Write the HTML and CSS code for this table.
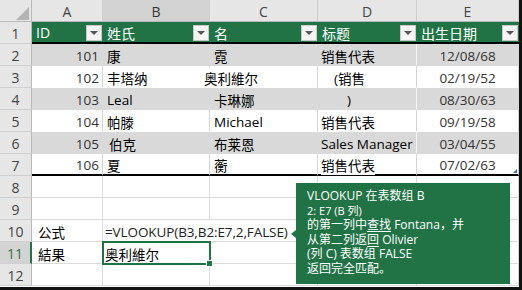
FILE: index.html
```html
<!DOCTYPE html>
<html lang="zh">
<head>
<meta charset="utf-8">
<link rel="stylesheet" href="styles.css">
</head>
<body>
<div class="sheet">
  <div class="grid">
    <div class="corner"><span class="tri"></span></div>
    <div class="ch">A</div><div class="ch selcol">B</div><div class="ch">C</div><div class="ch">D</div><div class="ch">E</div>

    <div class="rh">1</div>
    <div class="c th"><span>ID</span><i class="dd"></i></div>
    <div class="c th"><span>姓氏</span><i class="dd"></i></div>
    <div class="c th"><span>名</span><i class="dd"></i></div>
    <div class="c th"><span>标题</span><i class="dd"></i></div>
    <div class="c th"><span>出生日期</span><i class="dd"></i></div>

    <div class="rh">2</div>
    <div class="c band num">101</div>
    <div class="c band">康</div>
    <div class="c band">霓</div>
    <div class="c band dcol">销售代表</div>
    <div class="c band date">12/08/68</div>

    <div class="rh">3</div>
    <div class="c white num">102</div>
    <div class="c white">丰塔纳</div>
    <div class="c white shift"><span class="mask">奥利維尔</span></div>
    <div class="c white dcol in1">(销售</div>
    <div class="c white date">02/19/52</div>

    <div class="rh">4</div>
    <div class="c band num">103</div>
    <div class="c band">Leal</div>
    <div class="c band">卡琳娜</div>
    <div class="c band dcol in2">)</div>
    <div class="c band date">08/30/63</div>

    <div class="rh">5</div>
    <div class="c white num">104</div>
    <div class="c white">帕滕</div>
    <div class="c white">Michael</div>
    <div class="c white dcol">销售代表</div>
    <div class="c white date">09/19/58</div>

    <div class="rh">6</div>
    <div class="c band num">105</div>
    <div class="c band in0">伯克</div>
    <div class="c band">布莱恩</div>
    <div class="c band dcol">Sales Manager</div>
    <div class="c band date">03/04/55</div>

    <div class="rh">7</div>
    <div class="c white last num">106</div>
    <div class="c white last">夏</div>
    <div class="c white last">蘅</div>
    <div class="c white last dcol"><span class="mask">销售代表</span></div>
    <div class="c white last date resize">07/02/63</div>

    <div class="rh">8</div>
    <div class="c"></div><div class="c"></div><div class="c"></div><div class="c"></div><div class="c"></div>

    <div class="rh">9</div>
    <div class="c"></div><div class="c"></div><div class="c"></div><div class="c"></div><div class="c"></div>

    <div class="rh">10</div>
    <div class="c lab">公式</div>
    <div class="c formula noline">=VLOOKUP(B3,B2:E7,2,FALSE)</div>
    <div class="c"></div><div class="c"></div><div class="c"></div>

    <div class="rh selrow">11</div>
    <div class="c lab">結果</div>
    <div class="c active">奥利維尔</div>
    <div class="c"></div><div class="c"></div><div class="c"></div>

    <div class="rh">12</div>
    <div class="c"></div><div class="c"></div><div class="c"></div><div class="c"></div><div class="c"></div>
  </div>

  <div class="callout">
    <div>VLOOKUP 在表数组 B</div>
    <div class="small">2: E7 (B 列)</div>
    <div>的第一列中<span class="ul">查找</span> Fontana，并</div>
    <div>从第二列返<span class="ul">回</span> Olivier</div>
    <div>(列 C) 表数组 FALSE</div>
    <div>返回完全匹配。</div>
  </div>
</div>
</body>
</html>
```

FILE: styles.css
```css
html, body {
  margin: 0;
  padding: 0;
  background: #fff;
  overflow: hidden;
}

.sheet {
  position: relative;
  width: 522px;
  height: 290px;
  box-sizing: border-box;
  border-right: 3px solid #111;
  border-bottom: 3px solid #111;
  font-family: "Open Sans", "Noto Sans CJK SC", sans-serif;
  font-size: 13.5px;
  color: #000;
  overflow: hidden;
}

.grid {
  display: grid;
  grid-template-columns: 32px 71px 107px 108px 99px 102px;
  grid-auto-rows: 22px;
}

.grid > div {
  box-sizing: border-box;
  min-width: 0;
}

.corner {
  background: #e6e6e6;
  border-right: 1px solid #b8b8b8;
  border-bottom: 1px solid #b8b8b8;
  display: flex;
  justify-content: flex-end;
  align-items: flex-end;
  padding: 0 2px 1px 0;
}

.tri {
  width: 0;
  height: 0;
  border-left: 13px solid transparent;
  border-bottom: 13px solid #b4b4b4;
}

.ch {
  background: #e6e6e6;
  border-right: 1px solid #cdcdcd;
  border-bottom: 1px solid #b8b8b8;
  color: #444;
  font-size: 14px;
  display: flex;
  align-items: center;
  justify-content: center;
  padding-top: 2px;
}

.ch.selcol {
  background: #d3d3d3;
  color: #333;
}

.rh {
  background: #e6e6e6;
  border-right: 1px solid #b8b8b8;
  border-bottom: 1px solid #d0d0d0;
  color: #444;
  font-size: 14px;
  display: flex;
  align-items: center;
  justify-content: center;
  padding-top: 1px;
}

.rh.selrow {
  background: #d3d3d3;
  color: #3d6b4c;
  border-right: 2px solid #217346;
}

.c {
  border-right: 1px solid #d9d9d9;
  border-bottom: 1px solid #d9d9d9;
  display: flex;
  align-items: center;
  padding: 2px 3px 0 4px;
  white-space: nowrap;
}

.th {
  background: #217346;
  color: #fff;
  border-right: none;
  border-bottom: 2px solid #000;
  justify-content: space-between;
  padding: 0 1px 0 4px;
  font-size: 14px;
}

.th span {
  padding-top: 1px;
}

.dd {
  width: 16px;
  height: 16px;
  box-sizing: border-box;
  background: #f4f4f4;
  border: 1px solid #c8c8c8;
  display: flex;
  align-items: center;
  justify-content: center;
  margin-top: 2px;
}

.dd::after {
  content: "";
  width: 0;
  height: 0;
  border-left: 4px solid transparent;
  border-right: 4px solid transparent;
  border-top: 4px solid #555;
}

.band {
  background: #d9d9d9;
  border-right-color: #d9d9d9;
  border-bottom-color: #d9d9d9;
}

.band.dcol {
  border-right-color: #f4f4f4;
}

.white {
  background: #fff;
  border-right-color: #d4d4d4;
  border-bottom-color: #fff;
}

.last {
  border-bottom: 2px solid #000;
}

.num {
  justify-content: flex-end;
  color: #333;
}

.date {
  justify-content: center;
  color: #333;
  padding-left: 3px;
}

.dcol {
  padding-left: 3px;
}

.in0 {
  padding-left: 6px;
}

.in1 {
  padding-left: 16px;
}

.in2 {
  padding-left: 29px;
}

.shift {
  padding-left: 0;
}

.shift .mask {
  margin-left: -6px;
  background: #fff;
}

.mask {
  background: #fff;
}

.resize {
  position: relative;
}

.resize::after {
  content: "";
  position: absolute;
  right: 1px;
  bottom: 1px;
  width: 0;
  height: 0;
  border-left: 4px solid transparent;
  border-bottom: 4px solid #4a6aa8;
}

.grid > .c:not(.band):not(.white):not(.th) {
  border-right-color: #dadada;
  border-bottom-color: #dadada;
}

.lab {
  padding-left: 6px;
}

.formula {
  overflow: visible;
  color: #222;
  padding-left: 2px;
  letter-spacing: -0.1px;
}

.grid > .noline {
  border-right-color: transparent !important;
}

.active {
  position: relative;
  z-index: 1;
  outline: 2px solid #217346;
  outline-offset: -1px;
  padding-left: 2px;
}

.active::after {
  content: "";
  position: absolute;
  right: -4px;
  bottom: -4px;
  width: 5px;
  height: 5px;
  background: #217346;
  border: 1px solid #fff;
}

.callout {
  position: absolute;
  left: 296px;
  top: 183px;
  width: 214px;
  height: 101px;
  box-sizing: border-box;
  background: #217346;
  color: #fff;
  padding: 6px 8px 0 11px;
  font-size: 12px;
  line-height: 14.5px;
  white-space: nowrap;
  z-index: 2;
}

.callout::before {
  content: "";
  position: absolute;
  left: -5px;
  top: 47px;
  width: 0;
  height: 0;
  border-top: 4px solid transparent;
  border-bottom: 4px solid transparent;
  border-right: 5px solid #217346;
}

.callout .small {
  font-size: 11px;
}

.ul {
  text-decoration: underline;
  text-underline-offset: 2px;
}
```
